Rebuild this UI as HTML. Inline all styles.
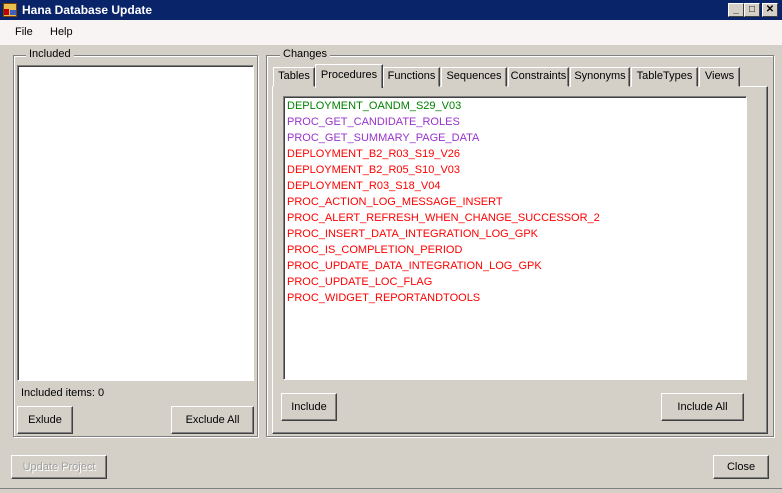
<html><head><style>
body{margin:0;width:782px;height:493px;background:#d4d0c8;font-family:"Liberation Sans",sans-serif;font-size:11px;position:relative;overflow:hidden}
div{position:absolute;box-sizing:border-box}
.title{left:0;top:0;width:782px;height:20px;background:#0a246a;color:#fff;font-weight:bold;font-size:12px;line-height:20px;padding-left:22px}
.cb{top:3px;width:16px;height:14px;background:#d4d0c8;border:1px solid;border-color:#fff #404040 #404040 #fff;color:#000;font-size:10px;line-height:12px;text-align:center;font-weight:bold}
.menu{left:0;top:20px;width:782px;height:25px;background:#f8f4f4}
.grp{border:1px solid #808080;box-shadow:1px 1px 0 #fff inset,1px 1px 0 #fff}
.lbl{background:#d4d0c8;padding:0 3px;top:-8px;font-size:11px}
.sunk{background:#fff;border:1px solid;border-color:#808080 #fff #fff #808080;box-shadow:inset 1px 1px 0 #404040}
.btn{background:#d4d0c8;border:1px solid;border-color:#fff #404040 #404040 #fff;box-shadow:inset -1px -1px 0 #808080;text-align:center;font-size:11px}
.tab{top:67px;height:20px;border:1px solid;border-color:#fff #404040 transparent #fff;box-shadow:inset -1px 0 0 #808080;text-align:center;line-height:17px;background:#d4d0c8}
.it{padding-left:3px;line-height:16px;font-size:11px;white-space:nowrap;position:static}
</style></head><body>
<div class="title">Hana Database Update</div>
<div style="left:3px;top:3px;width:14px;height:14px;background:#e8c050;border:1px solid #804000"></div>
<div style="left:4px;top:9px;width:5px;height:6px;background:#c00000"></div>
<div style="left:10px;top:10px;width:6px;height:5px;background:#4060c0"></div>
<div class="cb" style="left:728px">_</div>
<div class="cb" style="left:744px">□</div>
<div class="cb" style="left:762px">✕</div>
<div class="menu"><span style="position:absolute;left:15px;top:6px">File</span><span style="position:absolute;left:50px;top:6px">Help</span></div>

<div class="grp" style="left:13px;top:55px;width:245px;height:382px"><div class="lbl" style="left:12px">Included</div></div>
<div class="sunk" style="left:17px;top:65px;width:237px;height:316px"></div>
<div style="left:21px;top:387px">Included items: 0</div>
<div class="btn" style="left:17px;top:406px;width:56px;height:28px;line-height:26px">Exlude</div>
<div class="btn" style="left:171px;top:406px;width:83px;height:28px;line-height:26px">Exclude All</div>

<div class="grp" style="left:266px;top:55px;width:508px;height:382px"><div class="lbl" style="left:13px">Changes</div></div>
<div style="left:272px;top:86px;width:496px;height:348px;border:1px solid;border-color:#fff #404040 #404040 #fff;box-shadow:inset -1px -1px 0 #808080"></div>
<div class="tab" style="left:273px;width:42px">Tables</div>
<div class="tab" style="left:383px;width:57px">Functions</div>
<div class="tab" style="left:441px;width:66px">Sequences</div>
<div class="tab" style="left:508px;width:61px">Constraints</div>
<div class="tab" style="left:570px;width:60px">Synonyms</div>
<div class="tab" style="left:631px;width:67px">TableTypes</div>
<div class="tab" style="left:699px;width:41px">Views</div>
<div class="tab" style="left:315px;top:64px;width:68px;height:24px;line-height:20px;border-bottom:none">Procedures</div>
<div class="sunk" style="left:283px;top:96px;width:464px;height:284px;padding-top:1px">
<div class="it" style="color:#008000">DEPLOYMENT_OANDM_S29_V03</div>
<div class="it" style="color:#9932cc">PROC_GET_CANDIDATE_ROLES</div>
<div class="it" style="color:#9932cc">PROC_GET_SUMMARY_PAGE_DATA</div>
<div class="it" style="color:#f00">DEPLOYMENT_B2_R03_S19_V26</div>
<div class="it" style="color:#f00">DEPLOYMENT_B2_R05_S10_V03</div>
<div class="it" style="color:#f00">DEPLOYMENT_R03_S18_V04</div>
<div class="it" style="color:#f00">PROC_ACTION_LOG_MESSAGE_INSERT</div>
<div class="it" style="color:#f00">PROC_ALERT_REFRESH_WHEN_CHANGE_SUCCESSOR_2</div>
<div class="it" style="color:#f00">PROC_INSERT_DATA_INTEGRATION_LOG_GPK</div>
<div class="it" style="color:#f00">PROC_IS_COMPLETION_PERIOD</div>
<div class="it" style="color:#f00">PROC_UPDATE_DATA_INTEGRATION_LOG_GPK</div>
<div class="it" style="color:#f00">PROC_UPDATE_LOC_FLAG</div>
<div class="it" style="color:#f00">PROC_WIDGET_REPORTANDTOOLS</div>
</div>
<div class="btn" style="left:281px;top:393px;width:56px;height:28px;line-height:26px">Include</div>
<div class="btn" style="left:661px;top:393px;width:83px;height:28px;line-height:26px">Include All</div>

<div class="btn" style="left:11px;top:455px;width:96px;height:24px;line-height:22px;color:#a0a0a0;text-shadow:1px 1px 0 #fff">Update Project</div>
<div class="btn" style="left:713px;top:455px;width:56px;height:24px;line-height:22px">Close</div>
<div style="left:0;top:488px;width:782px;height:5px;border-top:1px solid #808080;background:#d4d0c8"></div>
</body></html>
